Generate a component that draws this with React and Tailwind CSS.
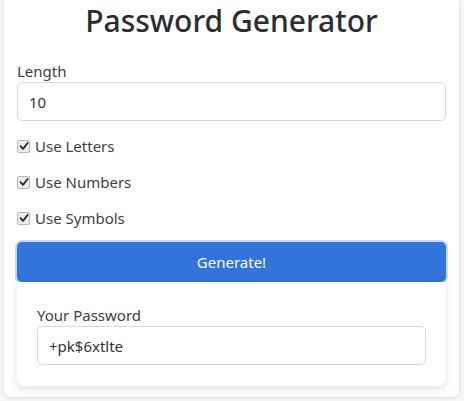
import React from "react";

function Check({ label }) {
  return (
    <label className="flex items-center h-[36px]">
      <span className="w-[13px] h-[13px] rounded-[2px] border border-[#b8b8b8] bg-[#ececec] flex items-center justify-center">
        <svg width="10" height="10" viewBox="0 0 10 10">
          <path d="M1.5 5.2 L4 7.8 L8.6 2" fill="none" stroke="#2b2b2b" strokeWidth="1.9" strokeLinecap="round" strokeLinejoin="round" />
        </svg>
      </span>
      <span className="ml-[5px]">{label}</span>
    </label>
  );
}

export default function App() {
  return (
    <div className="min-h-[401px] bg-[#f7f7f7] pl-[4px] pb-[4px] text-[#404040]" style={{ fontFamily: '"Noto Sans", "Open Sans", sans-serif' }}>
      <div className="w-[455px] bg-white rounded-b-[6px] shadow-[0_1px_4px_rgba(0,0,0,0.12)] px-[13px] pb-[11px]">
        <h1 className="text-center text-[30px] font-medium leading-[41px] text-[#2a2e33]">Password Generator</h1>
        <div className="mt-[19px] text-[15px] leading-[22px]">Length</div>
        <input
          defaultValue="10"
          className="mt-[0px] block w-full h-[39px] border border-[#d9d9d9] rounded-[5px] px-[11px] text-[15px] text-[#333] outline-none"
        />
        <div className="mt-[7px] text-[15px]">
          <Check label="Use Letters" />
          <Check label="Use Numbers" />
          <Check label="Use Symbols" />
        </div>
        <button className="mt-[6px] block w-full h-[40px] bg-[#3274d9] text-white text-[15px] rounded-[5px] shadow-[0_0_0_2px_#c6d9f7]">
          Generate!
        </button>
        <div className="rounded-b-[8px] bg-white shadow-[0_3px_8px_rgba(0,0,0,0.12)] px-[20px] pt-[22px] pb-[21px]">
          <div className="text-[15px] leading-[22px]">Your Password</div>
          <input
            defaultValue="+pk$6xtlte"
            className="block w-full h-[39px] border border-[#d9d9d9] rounded-[5px] px-[11px] text-[15px] text-[#333] outline-none"
          />
        </div>
      </div>
    </div>
  );
}
